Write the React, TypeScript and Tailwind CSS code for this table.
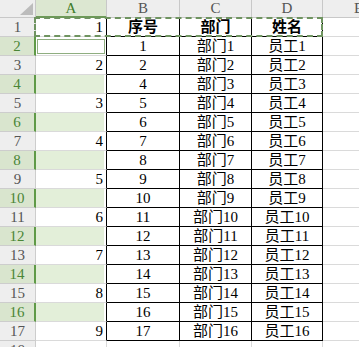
import React from 'react'

const rows: { a?: string; b: string; c: string; d: string; head?: boolean }[] = [
  { a: '1', b: '序号', c: '部门', d: '姓名', head: true },
  { b: '1', c: '部门1', d: '员工1' },
  { a: '2', b: '2', c: '部门2', d: '员工2' },
  { b: '4', c: '部门3', d: '员工3' },
  { a: '3', b: '5', c: '部门4', d: '员工4' },
  { b: '6', c: '部门5', d: '员工5' },
  { a: '4', b: '7', c: '部门6', d: '员工6' },
  { b: '8', c: '部门7', d: '员工7' },
  { a: '5', b: '9', c: '部门8', d: '员工8' },
  { b: '10', c: '部门9', d: '员工9' },
  { a: '6', b: '11', c: '部门10', d: '员工10' },
  { b: '12', c: '部门11', d: '员工11' },
  { a: '7', b: '13', c: '部门12', d: '员工12' },
  { b: '14', c: '部门13', d: '员工13' },
  { a: '8', b: '15', c: '部门14', d: '员工14' },
  { b: '16', c: '部门15', d: '员工15' },
  { a: '9', b: '17', c: '部门16', d: '员工16' },
]

const colHead = 'flex items-center justify-center bg-[#eeeeee] text-[#555] border-r border-b border-[#c8c8c8]'
const rowHead = 'flex items-center justify-center h-[19px] border-b border-r border-[#cdcdcd]'
const tableCell = 'flex items-center justify-center h-[19px] border-r border-b border-black text-black'

export default function App() {
  return (
    <div className="w-[359px] h-[347px] overflow-hidden bg-white font-['Liberation_Serif','Noto_Sans_CJK_SC',serif] text-[15px] leading-none">
      <div className="relative grid grid-cols-[36px_71px_73px_72px_71px_72px] w-[395px]">
        {/* column headers */}
        <div className="relative h-[18px] bg-[#eeeeee] border-r border-b border-[#c8c8c8]">
          <svg width="36" height="18" className="absolute left-0 top-0">
            <polygon points="33,3 33,15 20,15" fill="#bcbcbc" />
          </svg>
        </div>
        <div className="flex items-center justify-center h-[18px] bg-[#dce7d1] text-[#3f7d2b] border-r border-[#c8c8c8] border-b-2 border-b-[#6d9a57]">
          A
        </div>
        <div className={`${colHead} h-[18px]`}>B</div>
        <div className={`${colHead} h-[18px]`}>C</div>
        <div className={`${colHead} h-[18px]`}>D</div>
        <div className={`${colHead} h-[18px]`}>E</div>

        {rows.map((r, i) => {
          const n = i + 1
          const sel = n % 2 === 0
          return (
            <React.Fragment key={n}>
              {sel ? (
                <div className={`${rowHead} bg-[#d9e5ce] text-[#4a8636] border-r-2 border-r-[#5f9a47]`}>{n}</div>
              ) : (
                <div className={`${rowHead} bg-[#eeeeee] text-[#555]`}>{n}</div>
              )}
              {n === 2 ? (
                <div className="flex h-[19px] pt-[2px] pb-[1px] px-[1px] border-r border-r-black border-b border-b-[#dadada]">
                  <div className="flex-1 border border-[#8fae80] bg-white" />
                </div>
              ) : sel ? (
                <div className="flex h-[19px] border-r border-r-black border-b border-b-[#dadada]">
                  <div className="flex-1 mr-[2px] bg-[#e3efd9]" />
                </div>
              ) : (
                <div className="flex items-center justify-end pr-[3px] h-[19px] border-r border-r-black border-b border-b-[#dadada] text-black">
                  {r.a}
                </div>
              )}
              <div className={`${tableCell} ${r.head ? 'font-bold' : ''}`}>{r.b}</div>
              <div className={`${tableCell} ${r.head ? 'font-bold' : ''}`}>{r.c}</div>
              <div className={`${tableCell} ${r.head ? 'font-bold' : ''}`}>{r.d}</div>
              <div className="h-[19px] border-r border-b border-[#dadada]" />
            </React.Fragment>
          )
        })}

        {/* row 18, cut off by the window */}
        <div className={`${rowHead} bg-[#eeeeee] text-[#555]`}>18</div>
        <div className="h-[19px] border-r border-b border-[#dadada]" />
        <div className="h-[19px] border-r border-b border-[#dadada]" />
        <div className="h-[19px] border-r border-b border-[#dadada]" />
        <div className="h-[19px] border-r border-b border-[#dadada]" />
        <div className="h-[19px] border-r border-b border-[#dadada]" />

        {/* copy marquee around A1:D1 */}
        <div className="absolute left-[34px] top-[17px] w-[289px] h-[20px] border-2 border-dashed border-[#6f9460] pointer-events-none" />
      </div>
    </div>
  )
}
